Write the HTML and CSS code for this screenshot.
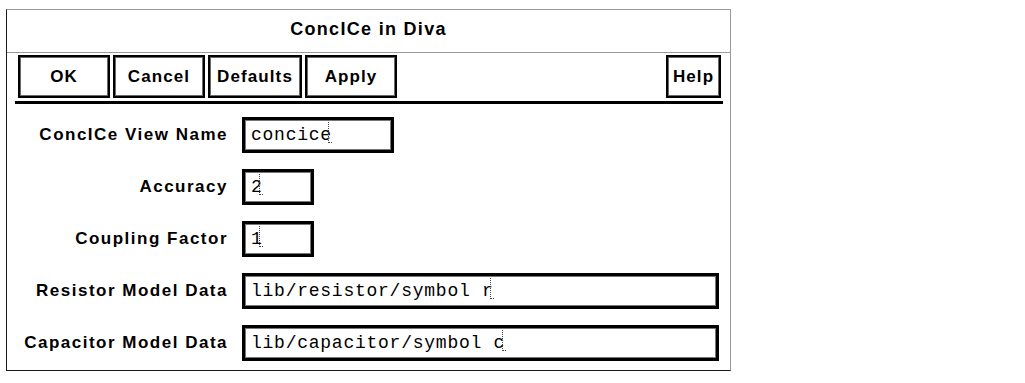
FILE: index.html
```html
<!DOCTYPE html>
<html>
<head>
<meta charset="utf-8">
<link rel="stylesheet" href="styles.css">
</head>
<body>
<div class="dialog">
  <div class="titlebar">ConcICe in Diva</div>
  <div class="buttons">
    <div class="btn w92">OK</div>
    <div class="btn w92">Cancel</div>
    <div class="btn w94">Defaults</div>
    <div class="btn w92">Apply</div>
    <div class="spacer"></div>
    <div class="btn w55">Help</div>
  </div>
  <div class="rule"></div>
  <div class="form">
    <div class="label">ConcICe View Name</div>
    <div class="field f-name"><span class="val">concic</span><span class="last">e<span class="cursor"></span></span></div>
    <div class="label">Accuracy</div>
    <div class="field f-short"><span class="last">2<span class="cursor"></span></span></div>
    <div class="label">Coupling Factor</div>
    <div class="field f-short"><span class="last">1<span class="cursor"></span></span></div>
    <div class="label">Resistor Model Data</div>
    <div class="field f-long"><span class="val">lib/resistor/symbol </span><span class="last">r<span class="cursor"></span></span></div>
    <div class="label">Capacitor Model Data</div>
    <div class="field f-long"><span class="val">lib/capacitor/symbol </span><span class="last">c<span class="cursor"></span></span></div>
  </div>
</div>
</body>
</html>
```

FILE: styles.css
```css
html, body {
  margin: 0;
  background: #fff;
}
body {
  padding: 9px 0 0 6px;
  font-family: "Liberation Sans", Arial, sans-serif;
  color: #000;
}
.dialog {
  width: 723px;
  height: 360px;
  border-top: 1px solid #9a9a9a;
  border-right: 1px solid #9a9a9a;
  border-left: 1px solid #1a1a1a;
  border-bottom: 1px solid #1a1a1a;
  background: #fff;
  display: flex;
  flex-direction: column;
}
.titlebar {
  height: 39px;
  padding-bottom: 3px;
  border-bottom: 1px solid #9a9a9a;
  display: flex;
  align-items: center;
  justify-content: center;
  font-weight: bold;
  font-size: 18px;
  letter-spacing: 1.3px;
}
.buttons {
  display: flex;
  gap: 3px;
  padding: 2px 9px 0 11px;
}
.spacer {
  flex: 1;
}
.btn {
  box-sizing: border-box;
  height: 43px;
  border: 2px solid #000;
  box-shadow: inset 0 0 0 1px #6a6a6a;
  display: flex;
  align-items: center;
  justify-content: center;
  font-weight: bold;
  font-size: 17px;
  letter-spacing: 1.1px;
}
.w92 { width: 92px; }
.w94 { width: 94px; }
.w55 { width: 55px; }
.rule {
  height: 3px;
  background: #000;
  margin: 3px 7px 0 8px;
}
.form {
  display: grid;
  grid-template-columns: 221px auto;
  column-gap: 14px;
  row-gap: 16px;
  padding-top: 13px;
  justify-items: start;
  align-items: center;
}
.label {
  justify-self: end;
  font-weight: bold;
  font-size: 17px;
  letter-spacing: 1.5px;
  white-space: nowrap;
}
.field {
  box-sizing: border-box;
  height: 36px;
  border: 3px solid #000;
  box-shadow: inset 0 0 0 1px #777;
  display: flex;
  align-items: center;
  padding-left: 6px;
  font-family: "Liberation Mono", "Courier New", monospace;
  font-size: 18px;
  letter-spacing: 0.75px;
  white-space: pre;
}
.f-name { width: 152px; }
.f-short { width: 72px; }
.f-long { width: 477px; }
.last {
  position: relative;
}
.cursor {
  position: absolute;
  left: 8px;
  top: -3px;
  width: 3px;
  height: 20px;
  border-left: 1px dotted #444;
  border-bottom: 1px dotted #444;
}
```
